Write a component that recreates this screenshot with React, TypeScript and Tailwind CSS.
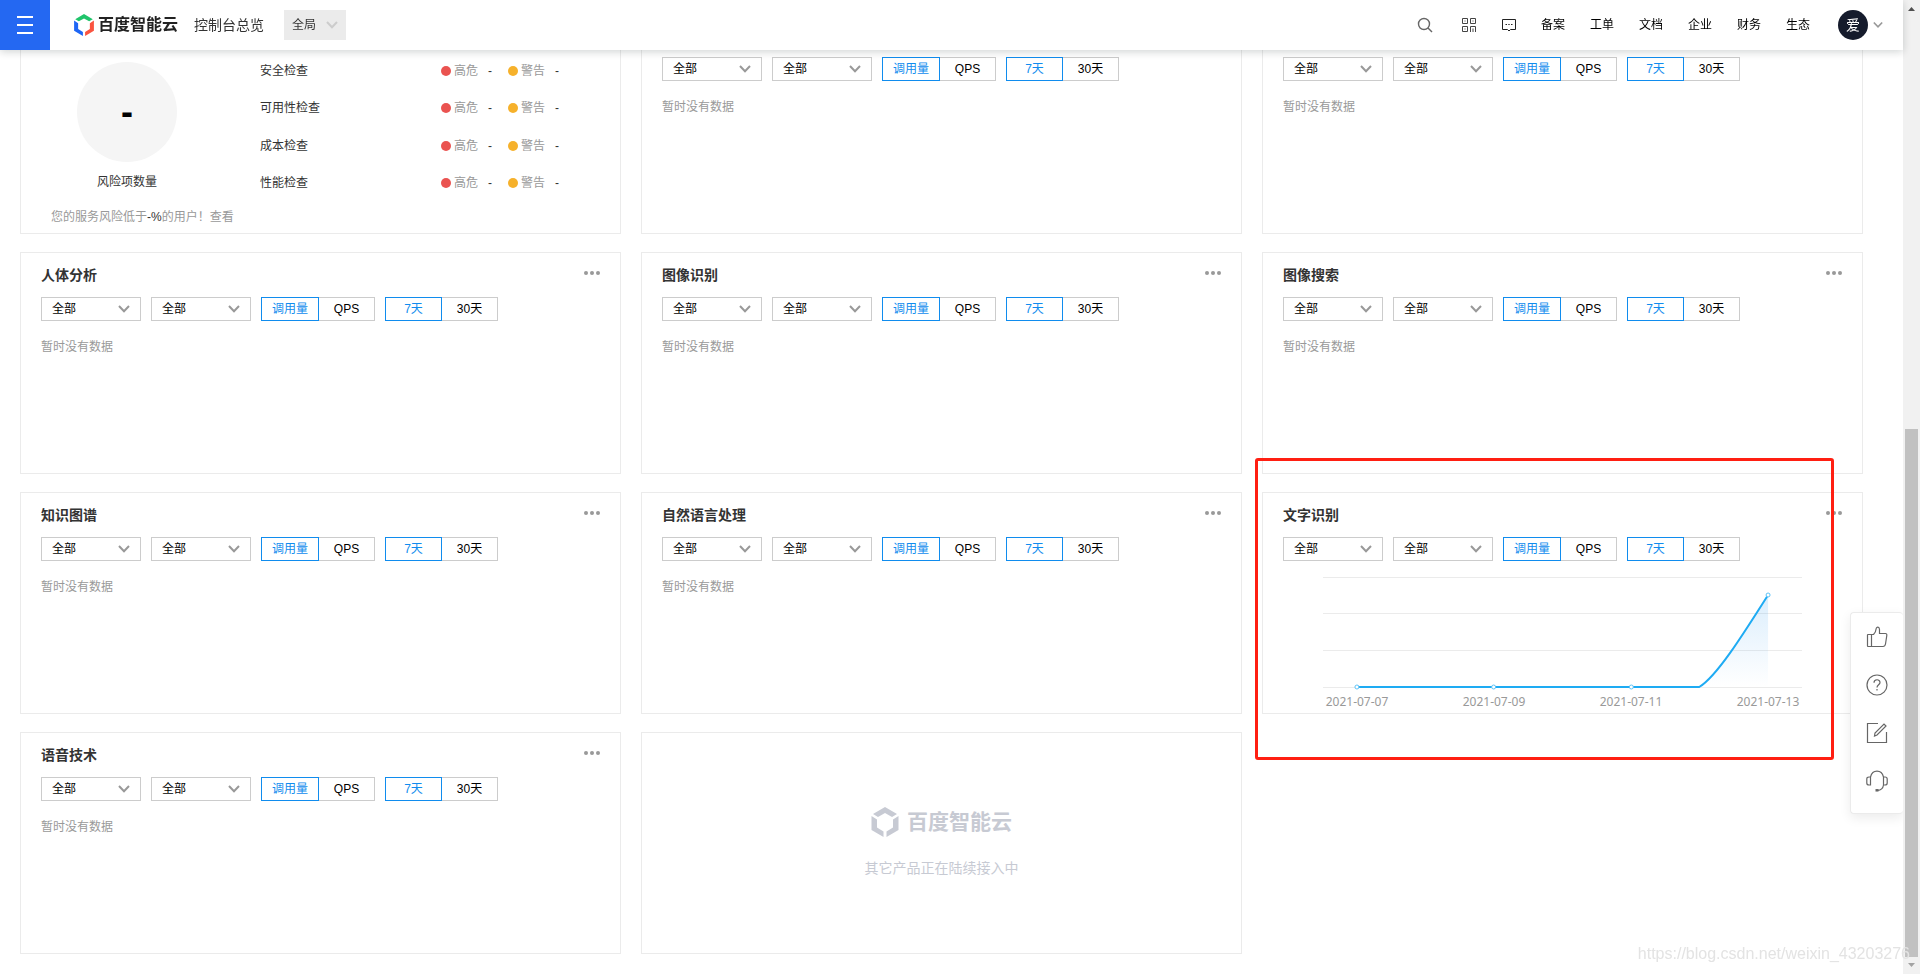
import React, { useState } from 'react';

type ProductCardProps = {
  title?: string;
  children?: React.ReactNode;
};

const LogoMark: React.FC<{ className?: string; colors: string[] }> = ({
  className,
  colors,
}) => (
  <svg viewBox="0 0 54 60" className={className} aria-hidden="true">
    <path fill={colors[0]} d="M27 0 51 14 41 20 27 12 13 20 3 14z" />
    <path fill={colors[1]} d="M0 18 11 25V41L24 49V60L0 46z" />
    <path fill={colors[2]} d="M54 18 43 25V41L30 49V60L54 46z" />
  </svg>
);

const Chevron: React.FC<{ className?: string }> = ({ className }) => (
  <svg
    viewBox="0 0 12 8"
    fill="none"
    stroke="currentColor"
    strokeWidth="2"
    className={className}
    aria-hidden="true"
  >
    <path d="M1 1 6 6.2 11 1" />
  </svg>
);

const FilterSelect: React.FC<{ label: string }> = ({ label }) => (
  <div className="relative w-[100px] h-6">
    <select
      aria-label={label}
      className="block appearance-none w-full h-full border border-[#ccc] bg-white pl-2.5 text-xs leading-5 text-black"
    >
      <option>全部</option>
    </select>
    <Chevron className="absolute right-[11px] top-2 w-3 h-2 text-[#999] pointer-events-none" />
  </div>
);

const Toggle: React.FC<{ options: string[] }> = ({ options }) => {
  const [active, setActive] = useState(options[0]);

  return (
    <div className="flex">
      {options.map((option) => (
        <button
          key={option}
          type="button"
          aria-pressed={active === option}
          onClick={() => setActive(option)}
          className={
            active === option
              ? 'min-w-[57px] h-6 border border-[#108cee] px-2.5 text-xs text-[#108cee]'
              : 'min-w-14 h-6 border border-l-0 border-[#ccc] px-2.5 text-xs text-black'
          }
        >
          {option}
        </button>
      ))}
    </div>
  );
};

const ProductCard: React.FC<ProductCardProps> = ({ title, children }) => (
  <section className="relative h-[222px] border border-[#ebebeb] px-5">
    <div className="flex items-start justify-between h-11">
      <h3 className="text-sm leading-11 font-bold text-[#333]">{title}</h3>
      {title && (
        <button
          type="button"
          aria-label="更多"
          className="flex items-center gap-0.5 h-10"
        >
          <span className="size-1 rounded-full bg-[#999]" />
          <span className="size-1 rounded-full bg-[#999]" />
          <span className="size-1 rounded-full bg-[#999]" />
        </button>
      )}
    </div>
    <div className="flex gap-2.5">
      <FilterSelect label="应用" />
      <FilterSelect label="接口" />
      <Toggle options={['调用量', 'QPS']} />
      <Toggle options={['7天', '30天']} />
    </div>
    {children || (
      <p className="mt-4 text-xs leading-5 text-[#999]">暂时没有数据</p>
    )}
  </section>
);

const dates = ['2021-07-07', '2021-07-09', '2021-07-11', '2021-07-13'];

const UsageChart = () => (
  <div className="mt-[15px] mx-10">
    <svg
      viewBox="0 0 480 114"
      preserveAspectRatio="none"
      className="block w-full h-[114px]"
      role="img"
      aria-label="调用量"
    >
      <defs>
        <linearGradient id="area" x1="0" y1="0" x2="0" y2="1">
          <stop offset="0" stopColor="#108cee" stopOpacity="0.15" />
          <stop offset="1" stopColor="#108cee" stopOpacity="0" />
        </linearGradient>
      </defs>
      <path
        d="M0 1.5H480M0 37.5H480M0 74.5H480M0 111.5H480"
        stroke="#ebebeb"
        fill="none"
      />
      <path d="M377 111C394 101 420 60 446 19V111z" fill="url(#area)" />
      <path
        d="M34 111H377C394 101 420 60 446 19"
        stroke="#1eabf3"
        strokeWidth="2"
        fill="none"
      />
      <g fill="#fff" stroke="#5cc2f6" strokeWidth="1">
        <circle cx="34" cy="111" r="2" />
        <circle cx="171" cy="111" r="2" />
        <circle cx="309" cy="111" r="2" />
        <circle cx="446" cy="19" r="2" />
      </g>
    </svg>
    <div className="flex justify-between font-['Noto_Sans',sans-serif] text-xs leading-6 text-[#999]">
      {dates.map((date) => (
        <span key={date} className="w-[68px] text-center">
          {date}
        </span>
      ))}
    </div>
  </div>
);

const checks = ['安全检查', '可用性检查', '成本检查', '性能检查'];

const RiskCard = () => (
  <section className="h-[222px] border border-[#ebebeb] pt-[39px] text-xs text-[#333]">
    <div className="flex">
      <div className="flex flex-col items-center w-[212px] pt-2.5">
        <div className="flex items-center justify-center size-[100px] rounded-full bg-[#f5f5f5] text-4xl font-bold text-black">
          -
        </div>
        <p className="mt-2.5 leading-5">风险项数量</p>
      </div>
      <ul className="grid grid-rows-4 h-[150px] ml-[27px]">
        {checks.map((check) => (
          <li key={check} className="flex items-center">
            <span className="w-[181px]">{check}</span>
            <span className="size-2.5 rounded-full bg-[#ea5350]" />
            <span className="ml-[3px] w-[34px] text-[#999]">高危</span>
            <span className="w-5">-</span>
            <span className="size-2.5 rounded-full bg-[#f6b12b]" />
            <span className="ml-[3px] w-[34px] text-[#999]">警告</span>
            <span>-</span>
          </li>
        ))}
      </ul>
    </div>
    <p className="ml-[30px] mt-1 leading-[22px] text-[#999]">
      您的服务风险低于<span className="text-[#333]">-%</span>的用户！
      <a href="#risk">查看</a>
    </p>
  </section>
);

const navLinks = ['备案', '工单', '文档', '企业', '财务', '生态'];

const Header = () => (
  <header className="fixed z-20 top-0 left-0 right-[17px] flex items-center h-[50px] bg-white shadow-[0_2px_8px_rgba(0,20,20,0.18)]">
    <button
      type="button"
      aria-label="菜单"
      className="flex flex-col items-center justify-center gap-1.5 size-[50px] bg-[#2468f2]"
    >
      <span className="w-4 h-0.5 bg-white" />
      <span className="w-4 h-0.5 bg-white" />
      <span className="w-4 h-0.5 bg-white" />
    </button>
    <a
      href="#home"
      className="flex items-center gap-1 ml-6 text-base font-bold text-[#222]"
    >
      <LogoMark
        className="w-5 h-[22px]"
        colors={['#20c46b', '#1e66f5', '#fa5440']}
      />
      百度智能云
    </a>
    <a href="#overview" className="ml-4 text-sm text-[#333]">
      控制台总览
    </a>
    <button
      type="button"
      className="flex items-center justify-between w-[62px] h-[30px] ml-5 px-2 bg-[#ebebeb] text-xs text-[#333]"
    >
      全局
      <Chevron className="w-3 h-2 text-[#ccc]" />
    </button>
    <nav className="flex items-center ml-auto mr-5 text-xs text-black">
      <button type="button" aria-label="搜索" className="mr-7">
        <svg
          viewBox="0 0 16 16"
          fill="none"
          stroke="#666"
          strokeWidth="1.4"
          className="size-4"
        >
          <circle cx="7" cy="7" r="5.5" />
          <path d="M11 11 15 15" />
        </svg>
      </button>
      <button type="button" aria-label="二维码" className="mr-6">
        <svg viewBox="0 0 16 16" fill="none" stroke="#444" className="size-4">
          <path d="M1.500 1.500H6.500V6.500H1.500zM9.500 1.500H14.500V6.500H9.500zM1.500 9.500H6.500V14.500H1.500zM9.500 15V9.500H14.500V15M12 11.500V15M3.500 4H4.500M11.500 4H12.500M3.500 12H4.500" />
        </svg>
      </button>
      <button type="button" aria-label="消息" className="mr-6">
        <svg viewBox="0 0 16 16" fill="none" stroke="#222" className="size-4">
          <path d="M1.500 2.500H14.500V12.500H9.500L8 14 6.500 12.500H1.500z" />
          <path d="M4.500 7.500H6M7.300 7.500H8.700M10 7.500H11.500" />
        </svg>
      </button>
      <div className="flex gap-[25px]">
        {navLinks.map((link) => (
          <a key={link} href={`#${link}`}>
            {link}
          </a>
        ))}
      </div>
      <button type="button" className="flex items-center gap-[5px] ml-7">
        <span className="flex items-center justify-center size-[30px] rounded-full bg-[#151b2c] text-sm text-white">
          爱
        </span>
        <Chevron className="w-2.5 h-2 text-[#999]" />
      </button>
    </nav>
  </header>
);

const SideTools = () => (
  <aside className="fixed z-10 right-[17px] top-[612px] flex flex-col w-[53px] pb-2 rounded-sm border border-r-0 border-[#ebebeb] bg-white text-[#666] shadow-[0_4px_12px_rgba(0,0,0,0.08)]">
    <button
      type="button"
      aria-label="点赞"
      className="flex items-center justify-center h-12"
    >
      <svg
        viewBox="0 0 22 22"
        fill="none"
        stroke="currentColor"
        strokeWidth="1.2"
        className="size-[22px]"
      >
        <path d="M1.500 9Q1.500 8.500 2 8.500H7.500C9.500 6.500 10 5 10.200 2.500 10.500 0.500 13.500 0.500 13.500 3.500V7.500H19.500Q21 7.500 20.800 9.500L19.500 18Q19 20.500 17 20.500H2Q1.500 20.500 1.500 20zM5.500 8.500V20.500" />
      </svg>
    </button>
    <button
      type="button"
      aria-label="帮助"
      className="flex items-center justify-center h-12"
    >
      <svg
        viewBox="0 0 22 22"
        fill="none"
        stroke="currentColor"
        strokeWidth="1.2"
        className="size-[22px]"
      >
        <circle cx="11" cy="11" r="10" />
        <path d="M8 8.800C8 4.800 14 4.800 14 8.500 14 10.800 11 10.800 11 13.500M11 15V16.500" />
      </svg>
    </button>
    <button
      type="button"
      aria-label="反馈"
      className="flex items-center justify-center h-12"
    >
      <svg
        viewBox="0 0 22 22"
        fill="none"
        stroke="currentColor"
        strokeWidth="1.2"
        className="size-[22px]"
      >
        <path d="M12 1.500H1.500V20.500H20.500V10M8.500 14 9 11 18 2 20 4 11 13z" />
      </svg>
    </button>
    <button
      type="button"
      aria-label="客服"
      className="flex items-center justify-center h-12"
    >
      <svg
        viewBox="0 0 22 22"
        fill="none"
        stroke="currentColor"
        strokeWidth="1.2"
        className="size-[22px]"
      >
        <path d="M4.500 7C5.500 3 8 1.200 11 1.200S16.500 3 17.500 7M4.500 7H3Q0.800 7 0.800 9V13Q0.800 15 3 15H4.500zM17.500 7H19Q21.200 7 21.200 9V13Q21.200 15 19 15H17.500zM17.500 15C17 18.500 15 20.300 11.500 20.300" />
        <path d="M9.500 20.300H12.500" strokeWidth="2.5" />
      </svg>
    </button>
  </aside>
);

const Scrollbar = () => (
  <div className="fixed z-10 inset-y-0 right-0 flex flex-col items-center w-[17px] bg-[#f1f1f1]">
    <svg viewBox="0 0 17 17" className="size-[17px] shrink-0">
      <path fill="#505050" d="M5 11 8.500 7 12 11z" />
    </svg>
    <div className="grow-[412]" />
    <div className="grow-[528] w-[13px] bg-[#c1c1c1]" />
    <svg viewBox="0 0 17 17" className="size-[17px] shrink-0">
      <path fill="#a3a3a3" d="M5 6 8.500 10 12 6z" />
    </svg>
  </div>
);

const App = () => {
  return (
    <div className="min-h-screen pr-[17px] bg-white font-['Liberation_Sans','Noto_Sans_CJK_SC',sans-serif]">
      <Header />
      <main className="grid grid-cols-3 gap-x-5 gap-y-[18px] pt-3 pb-5 pl-5 pr-10">
        <RiskCard />
        <ProductCard />
        <ProductCard />
        <ProductCard title="人体分析" />
        <ProductCard title="图像识别" />
        <ProductCard title="图像搜索" />
        <ProductCard title="知识图谱" />
        <ProductCard title="自然语言处理" />
        <ProductCard title="文字识别">
          <UsageChart />
          {/* Highlight frame */}
          <div className="absolute -left-2 -top-[35px] right-7 -bottom-[47px] rounded-[3px] border-3 border-[#ff1f12] pointer-events-none" />
        </ProductCard>
        <ProductCard title="语音技术" />
        <section className="flex flex-col items-center justify-center h-[222px] border border-[#ebebeb] text-[#c7cad3]">
          <div className="flex items-center gap-2 text-[21px] leading-8 font-bold">
            <LogoMark
              className="w-7 h-[30px]"
              colors={['#c7cad3', '#c7cad3', '#c7cad3']}
            />
            百度智能云
          </div>
          <p className="mt-[18px] text-sm leading-6">其它产品正在陆续接入中</p>
        </section>
      </main>
      <SideTools />
      <Scrollbar />
      <p className="fixed z-20 right-2.5 bottom-2 text-base leading-6 text-[#e3e3e3]">
        https://blog.csdn.net/weixin_43203276
      </p>
    </div>
  );
};

export default App;
